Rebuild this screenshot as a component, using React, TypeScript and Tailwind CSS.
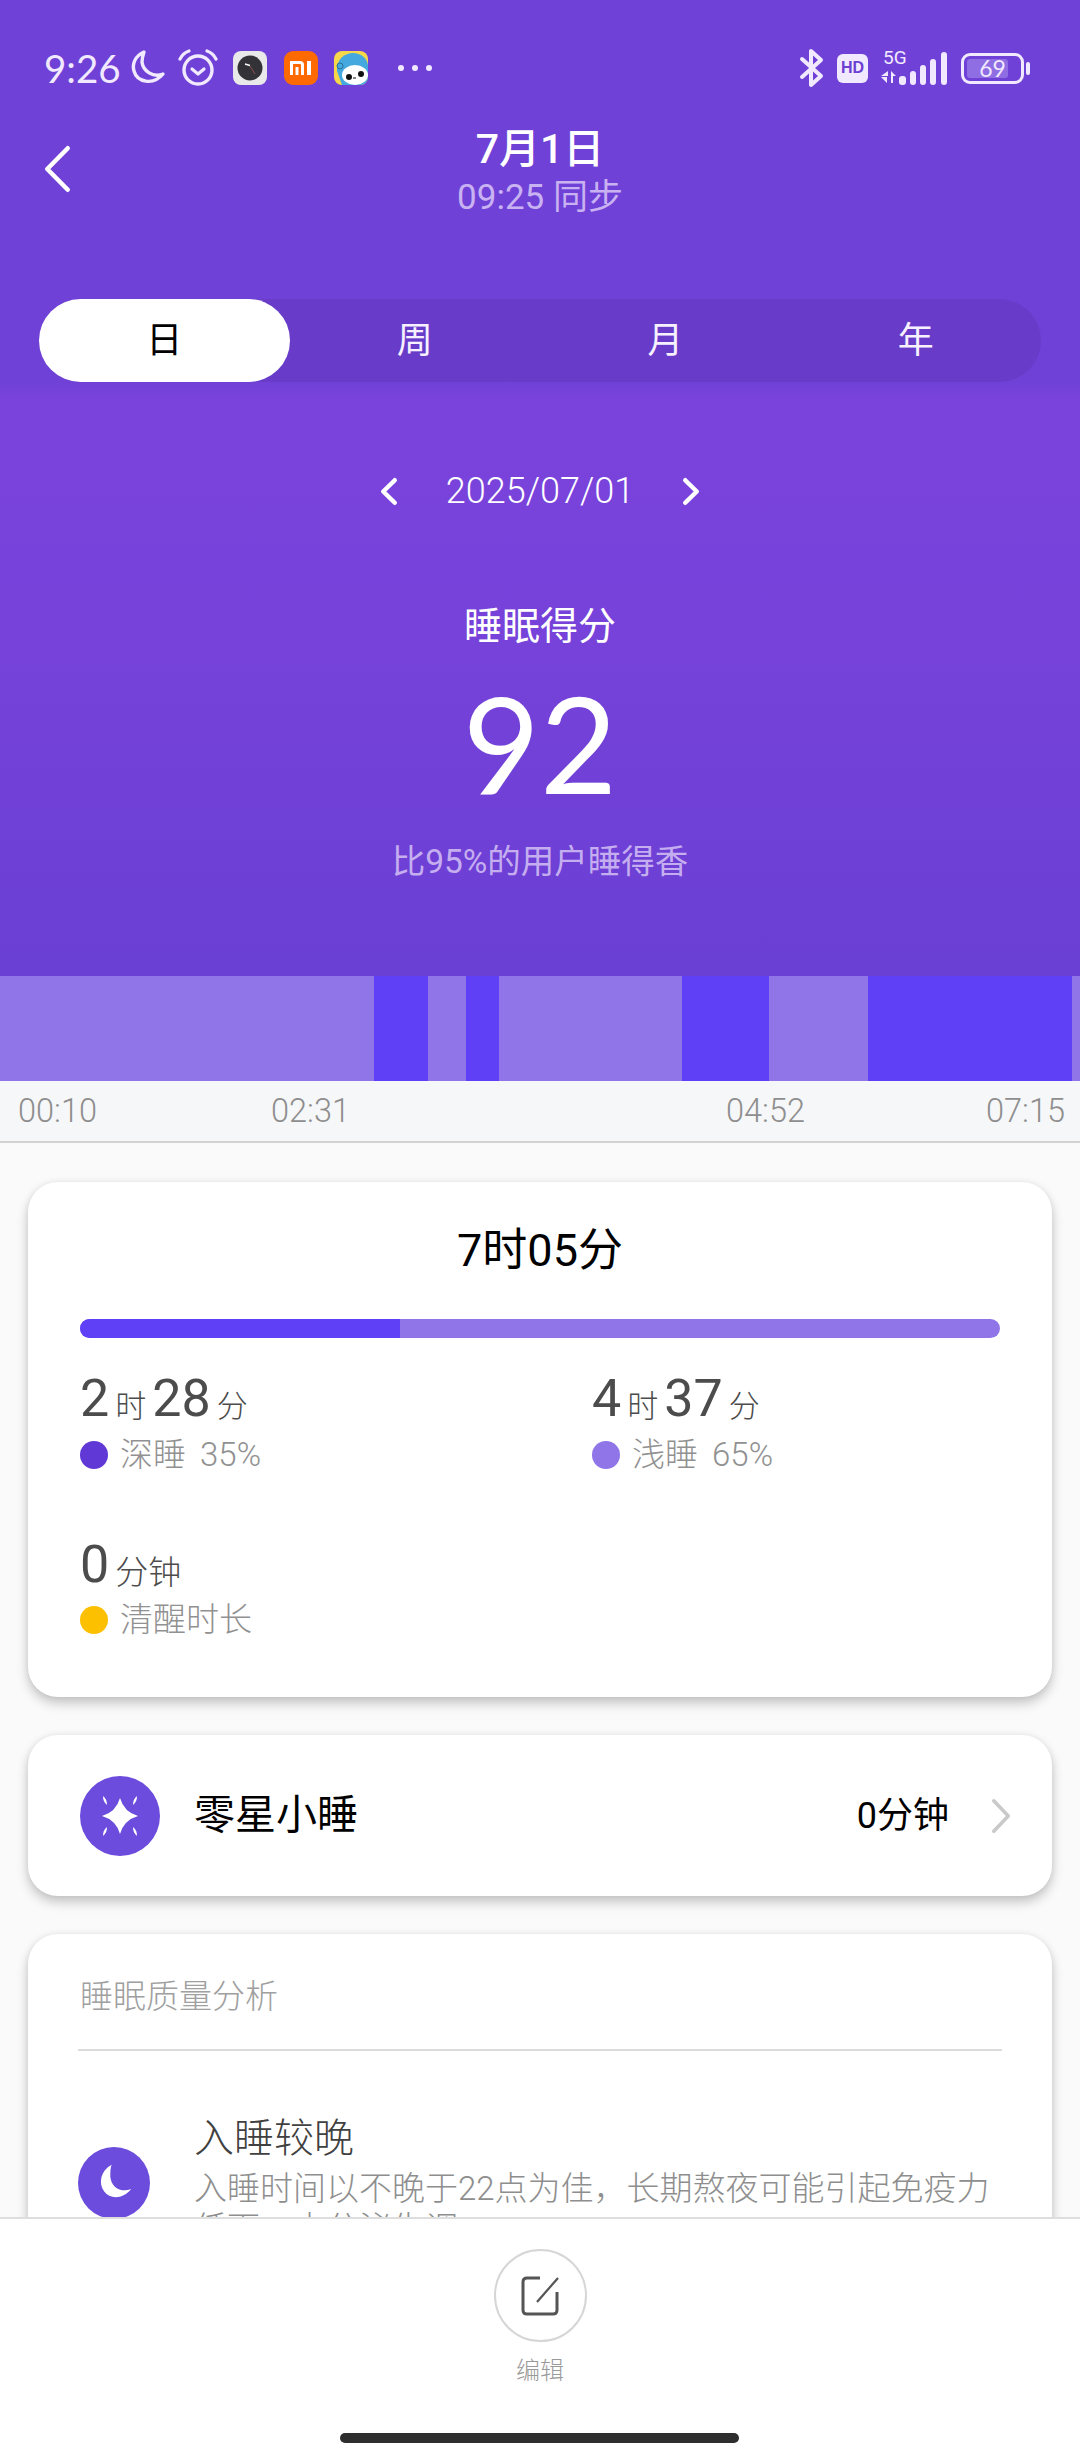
const FONT = "font-['Roboto','Noto_Sans_CJK_SC',sans-serif]";

const SEGMENTS = [
    { width: 374, deep: false },
    { width: 54, deep: true },
    { width: 38, deep: false },
    { width: 33, deep: true },
    { width: 183, deep: false },
    { width: 87, deep: true },
    { width: 99, deep: false },
    { width: 204, deep: true },
    { width: 8, deep: false },
];

function Chevron({ dir, width, height, stroke, color }: { dir: "left" | "right"; width: number; height: number; stroke: number; color: string }) {
    const inset = stroke / 2 + 1;
    const d =
        dir === "left"
            ? `M${width - inset} ${inset} L${inset} ${height / 2} L${width - inset} ${height - inset}`
            : `M${inset} ${inset} L${width - inset} ${height / 2} L${inset} ${height - inset}`;
    return (
        <svg width={width} height={height} viewBox={`0 0 ${width} ${height}`} fill="none">
            <path d={d} stroke={color} strokeWidth={stroke} strokeLinecap="round" strokeLinejoin="round" />
        </svg>
    );
}

function StatusBar() {
    return (
        <div className="h-[124px] flex items-start justify-between pt-[51px] pl-[44px] pr-[50px] text-[#f1e9ff]">
            <div className="flex items-center h-[34px]">
                <span className="text-[38.5px] leading-[34px] w-[80px] font-normal font-['Lato',sans-serif]">9:26</span>
                <svg width="38" height="38" viewBox="0 0 38 38" fill="none" className="ml-[5px]">
                    <path d="M15 3 C6 7 3 15 5 22 C8 33 24 37 34 25 C24 29 14 22 13 13 C13 9 14 6 15 3 Z" stroke="#f1e9ff" strokeWidth="3.4" strokeLinejoin="round" />
                </svg>
                <svg width="42" height="38" viewBox="0 0 42 38" fill="none" className="ml-[10px]">
                    <circle cx="21" cy="21" r="14" stroke="#f1e9ff" strokeWidth="3.4" />
                    <path d="M15 20 L21 25 L27 20" stroke="#f1e9ff" strokeWidth="3.2" strokeLinecap="round" strokeLinejoin="round" />
                    <path d="M3 10 Q6 4 12 2 M39 10 Q36 4 30 2" stroke="#f1e9ff" strokeWidth="3.2" strokeLinecap="round" />
                </svg>
                <div className="ml-[14px] w-[34px] h-[34px] rounded-[8px] bg-[#e9e9e9] flex items-center justify-center">
                    <svg width="26" height="26" viewBox="0 0 26 26">
                        <circle cx="13" cy="13" r="12.5" fill="#333237" />
                        <path d="M8 9 L13 10.5" stroke="#fff" strokeWidth="1.4" />
                        <path d="M13 11 L18 19" stroke="#8a5050" strokeWidth="1" />
                    </svg>
                </div>
                <div className="ml-[17px] w-[34px] h-[34px] rounded-[9px] bg-[#ff6a00] flex items-center justify-center">
                    <svg width="24" height="16" viewBox="0 0 24 16" fill="none">
                        <path d="M1 1 H11 Q15 1 15 5 V15 H12 V5 Q12 4 11 4 H4 V15 H1 Z M6.5 7 H9.5 V15 H6.5 Z M18 1 H22 V15 H18 Z" fill="#fff" />
                    </svg>
                </div>
                <div className="ml-[16px] w-[34px] h-[34px] rounded-[8px] bg-[#f7d84a] overflow-hidden">
                    <svg width="34" height="34" viewBox="0 0 34 34">
                        <path d="M3 20 C2 8 11 2 19 2 C27 2 33 7 34 14 V34 H8 Z" fill="#45a9e0" />
                        <circle cx="6" cy="15" r="3" fill="#45a9e0" stroke="#2b6f97" strokeWidth="1" />
                        <ellipse cx="21" cy="24" rx="13" ry="10" fill="#fff" />
                        <circle cx="15" cy="26" r="3" fill="#111" />
                        <circle cx="27" cy="23" r="3" fill="#111" />
                        <path d="M19 27 H22" stroke="#111" strokeWidth="1.2" />
                    </svg>
                </div>
                <div className="ml-[30px] flex gap-[8px]">
                    <div className="w-[6px] h-[6px] rounded-full bg-[#f1e9ff]" />
                    <div className="w-[6px] h-[6px] rounded-full bg-[#f1e9ff]" />
                    <div className="w-[6px] h-[6px] rounded-full bg-[#f1e9ff]" />
                </div>
            </div>
            <div className="flex items-center h-[34px]">
                <svg width="26" height="40" viewBox="0 0 26 40" fill="none">
                    <path d="M3 11 L22 28 L12 37 V3 L22 12 L3 29" stroke="#f1e9ff" strokeWidth="4" strokeLinejoin="round" strokeLinecap="round" />
                </svg>
                <div className="ml-[12px] w-[31px] h-[29px] rounded-[6px] bg-[#f1e9ff] flex items-center justify-center">
                    <span className="text-[16px] leading-none font-bold text-[#6c3fd2] font-['Liberation_Sans',sans-serif]">HD</span>
                </div>
                <div className="ml-[12px] w-[68px] h-[38px] relative">
                    <span className="absolute left-[3px] -top-[1px] text-[19px] leading-[19px]">5G</span>
                    <svg width="68" height="38" viewBox="0 0 68 38" fill="#f1e9ff">
                        <path d="M1 27 L8 27 L8 22 Z M1 28 H7 L7 34 Z M11 22 L16 27 H13 V34 H11 Z" />
                        <rect x="19" y="27" width="7" height="9" rx="3" />
                        <rect x="30" y="22" width="6" height="14" rx="3" />
                        <rect x="40" y="16" width="6" height="20" rx="3" />
                        <rect x="50" y="10" width="6" height="26" rx="3" />
                        <rect x="61" y="3" width="6" height="33" rx="3" />
                    </svg>
                </div>
                <div className="ml-[13px] w-[63px] h-[31px] rounded-[9px] border-[3px] border-[#f1e9ff] relative p-[3px]">
                    <div className="w-[41px] h-full rounded-[3px] bg-[#8f6de3]" />
                    <span className="absolute inset-0 flex items-center justify-center text-[23px] leading-none text-[#f1e9ff] font-['Lato',sans-serif]">69</span>
                </div>
                <div className="ml-[2px] w-[4px] h-[13px] rounded-full bg-[#f1e9ff]" />
            </div>
        </div>
    );
}

function Tabs() {
    return (
        <div className="ml-[39px] mr-[39px] h-[83px] rounded-full bg-[#683cc9] grid grid-cols-4 text-center text-[36px] text-[#f6f0ff]">
            <div className="rounded-full bg-white text-black flex items-center justify-center">日</div>
            <div className="flex items-center justify-center">周</div>
            <div className="flex items-center justify-center">月</div>
            <div className="flex items-center justify-center">年</div>
        </div>
    );
}

function Stat({ parts, label, dot }: { parts: [string, string][]; label: string; dot: string }) {
    return (
        <div className="h-[165.5px]">
            <div className="h-[54px] flex items-end text-[#4c4c4c]">
                {parts.map(([value, unit]) => (
                    <span key={unit} className="flex items-end">
                        <span className="text-[52px] leading-[54px]">{value}</span>
                        <span className={`leading-[38px] font-light mx-[6px] ${unit.length > 1 ? "text-[33px]" : "text-[31px]"}`}>{unit}</span>
                    </span>
                ))}
            </div>
            <div className="mt-[8.5px] flex items-center h-[40px]">
                <div className={`w-[28px] h-[28px] rounded-full ${dot}`} />
                <span className="ml-[12px] text-[33px] leading-[40px] font-light text-[#919191] [word-spacing:6px]">{label}</span>
            </div>
        </div>
    );
}

export default function App() {
    return (
        <div className={`relative w-[1080px] h-[2460px] overflow-hidden bg-[#fafafa] ${FONT}`}>
            <div className="h-[976px] bg-[linear-gradient(180deg,#7041d7_0px,#7041d7_382px,#7a43dc_400px,#7642da_640px,#6a3fd3_976px)] text-white">
                <StatusBar />
                <div className="h-[175px] relative">
                    <div className="absolute left-[44px] top-[21px]">
                        <Chevron dir="left" width={27} height={48} stroke={4.5} color="#ffffff" />
                    </div>
                    <div className="text-center text-[41px] leading-[50px] font-medium">7月1日</div>
                    <div className="text-center text-[35px] leading-[40px] text-[#c8b2f2] mt-[4px]">09:25 同步</div>
                </div>
                <Tabs />
                <div className="mt-[84px] h-[50px] flex items-center justify-center">
                    <Chevron dir="left" width={18} height={29} stroke={4.5} color="#ffffff" />
                    <span className="mx-[48px] text-[36px] leading-[50px] font-light">2025/07/01</span>
                    <Chevron dir="right" width={18} height={29} stroke={4.5} color="#ffffff" />
                </div>
                <div className="mt-[85px] text-center text-[38px] leading-[50px]">睡眠得分</div>
                <div className="mt-[22px] text-center text-[133px] leading-[140px] font-['Lato',sans-serif]">92</div>
                <div className="mt-[27px] text-center text-[33.5px] leading-[44px] text-[#c5aef0]">比95%的用户睡得香</div>
            </div>

            <div className="flex h-[105px]">
                {SEGMENTS.map((segment, index) => (
                    <div
                        key={index}
                        className={segment.deep ? "bg-[#5f40f6]" : "bg-[#9075e8]"}
                        style={{ width: segment.width }}
                    />
                ))}
            </div>
            <div className="h-[62px] bg-[#f6f7f9] border-b-2 border-[#d2d2d2] text-[32.5px] font-light leading-[60px] text-[#8e8e8e]">
                <div className="flex pl-[18px]">
                    <span className="w-[253px]">00:10</span>
                    <span className="w-[455px]">02:31</span>
                    <span className="w-[260px]">04:52</span>
                    <span>07:15</span>
                </div>
            </div>

            <div className="px-[28px] pt-[39px] flex flex-col gap-[38px]">
                <div className="h-[515px] rounded-[30px] bg-white shadow-[0_6px_12px_rgba(0,0,0,0.22),0_0_6px_rgba(0,0,0,0.06)] px-[52px]">
                    <div className="pt-[42px] text-center text-[45px] leading-[54px] text-black">7时05分</div>
                    <div className="mt-[41px] h-[19px] rounded-full overflow-hidden flex bg-[#9075e8]">
                        <div className="w-[320px] bg-[#5f40f6]" />
                    </div>
                    <div className="mt-[34px] grid grid-cols-2">
                        <Stat parts={[["2", "时"], ["28", "分"]]} label="深睡 35%" dot="bg-[#6038d6]" />
                        <div className="pl-[52px]">
                            <Stat parts={[["4", "时"], ["37", "分"]]} label="浅睡 65%" dot="bg-[#9075e8]" />
                        </div>
                        <Stat parts={[["0", "分钟"]]} label="清醒时长" dot="bg-[#fdc000]" />
                    </div>
                </div>

                <div className="h-[161px] rounded-[30px] bg-white shadow-[0_6px_12px_rgba(0,0,0,0.22),0_0_6px_rgba(0,0,0,0.06)] pl-[52px] pr-[41px] flex items-center">
                    <div className="w-[80px] h-[80px] rounded-full bg-[#6b4cdc] flex items-center justify-center">
                        <svg width="42" height="42" viewBox="0 0 42 42" fill="#fff">
                            <path d="M21 3 Q25 17 39 21 Q25 25 21 39 Q17 25 3 21 Q17 17 21 3 Z" />
                            <path d="M4 1 Q8 4 8 10 Q4 7 4 1 Z M38 1 Q34 4 34 10 Q38 7 38 1 Z M4 41 Q8 38 8 32 Q4 35 4 41 Z M38 41 Q34 38 34 32 Q38 35 38 41 Z" />
                        </svg>
                    </div>
                    <span className="ml-[34px] text-[41px] text-black">零星小睡</span>
                    <span className="ml-auto text-[36px] text-black">0分钟</span>
                    <div className="ml-[42px]">
                        <Chevron dir="right" width={20} height={36} stroke={3.5} color="#c9c9c9" />
                    </div>
                </div>

                <div className="h-[600px] rounded-[30px] bg-white shadow-[0_6px_12px_rgba(0,0,0,0.22),0_0_6px_rgba(0,0,0,0.06)] px-[50px]">
                    <div className="pl-[2px] pt-[40px] pb-[29px] text-[33px] leading-[46px] font-light text-[#a0a0a0] border-b-2 border-[#dcdcdc]">睡眠质量分析</div>
                    <div className="mt-[62px] flex items-start">
                        <div className="w-[72px] h-[72px] rounded-full bg-[#6b4cdc] flex items-center justify-center mt-[34px]">
                            <svg width="44" height="44" viewBox="0 0 36 36" fill="#fff">
                                <path d="M16 3 C7 8 5 18 10 25 C15 32 26 31 32 23 C24 26 16 22 15 13 C15 9 15 6 16 3 Z" />
                            </svg>
                        </div>
                        <div className="ml-[44px] flex-1">
                            <div className="text-[40px] leading-[52px] text-[#404040] font-light">入睡较晚</div>
                            <div className="text-[33px] leading-[40px] text-[#8e8e8e] font-light mt-[4px]">入睡时间以不晚于22点为佳，长期熬夜可能引起免疫力低下、内分泌失调。</div>
                        </div>
                    </div>
                </div>
            </div>

            <div className="absolute left-0 right-0 bottom-0 h-[243px] bg-white border-t-2 border-[#dedede] flex flex-col items-center">
                <div className="mt-[30px] w-[93px] h-[93px] rounded-full border-2 border-[#d6d6d6] flex items-center justify-center">
                    <svg width="38" height="40" viewBox="0 0 38 40" fill="none" stroke="#555" strokeWidth="3">
                        <path d="M19 2 H6 Q2 2 2 6 V34 Q2 38 6 38 H32 Q36 38 36 34 V16" />
                        <path d="M37 2 L16 26" strokeWidth="2.2" />
                    </svg>
                </div>
                <span className="mt-[12px] text-[24px] leading-[34px] font-light text-[#9a9a9a]">编辑</span>
                <div className="absolute left-[340px] bottom-[17px] w-[399px] h-[10px] rounded-full bg-[#2e2e2e]" />
            </div>
        </div>
    );
}
